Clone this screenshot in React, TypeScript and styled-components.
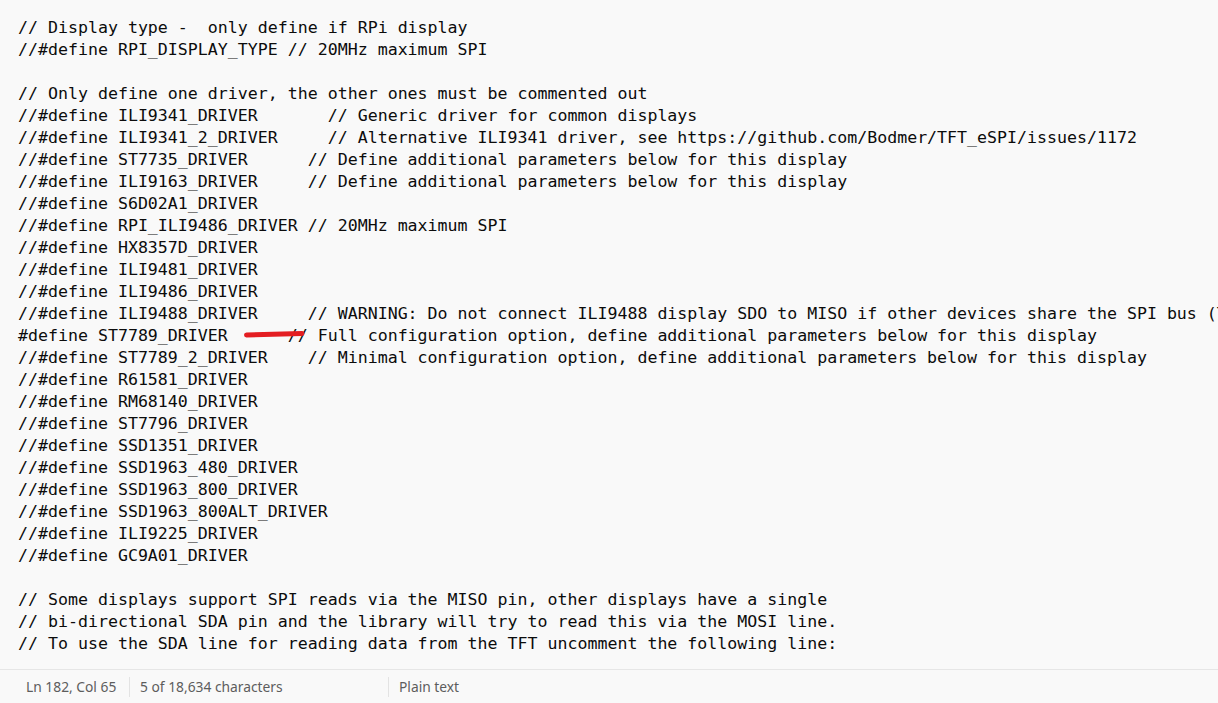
import React from "react";
import styled, { createGlobalStyle } from "styled-components";

const Global = createGlobalStyle`
  html, body { margin: 0; padding: 0; background: #f9f9f9; overflow: hidden; }
  #root { width: 1218px; height: 703px; }
`;

const Window = styled.div`
  width: 1218px;
  height: 703px;
  display: flex;
  flex-direction: column;
  background: #f9f9f9;
`;

const Editor = styled.div`
  position: relative;
  flex: 1;
  overflow: hidden;
  padding: 17px 0 0 18px;
`;

const Code = styled.pre`
  margin: 0;
  font-family: "DejaVu Sans Mono", "Liberation Mono", monospace;
  font-size: 16.6px;
  line-height: 22px;
  color: #0c0c0c;
  white-space: pre;
`;

const Mark = styled.svg`
  position: absolute;
  left: 0;
  top: 0;
  pointer-events: none;
`;

const StatusBar = styled.div`
  height: 33px;
  border-top: 1px solid #e6e6e6;
  display: flex;
  align-items: center;
  font-family: "Noto Sans", "Open Sans", sans-serif;
  font-size: 13.8px;
  color: #5d5d5d;
  padding-left: 14px;
`;

const StatusItem = styled.div<{ $w?: number; $sep?: boolean }>`
  ${(p) => (p.$w ? `width: ${p.$w}px;` : "")}
  box-sizing: border-box;
  height: 20px;
  display: flex;
  align-items: center;
  padding-left: ${(p) => (p.$sep ? 10 : 12)}px;
  border-left: ${(p) => (p.$sep ? "1px solid #e3e3e3" : "none")};
`;

const lines = [
  "// Display type -  only define if RPi display",
  "//#define RPI_DISPLAY_TYPE // 20MHz maximum SPI",
  "",
  "// Only define one driver, the other ones must be commented out",
  "//#define ILI9341_DRIVER       // Generic driver for common displays",
  "//#define ILI9341_2_DRIVER     // Alternative ILI9341 driver, see https://github.com/Bodmer/TFT_eSPI/issues/1172",
  "//#define ST7735_DRIVER      // Define additional parameters below for this display",
  "//#define ILI9163_DRIVER     // Define additional parameters below for this display",
  "//#define S6D02A1_DRIVER",
  "//#define RPI_ILI9486_DRIVER // 20MHz maximum SPI",
  "//#define HX8357D_DRIVER",
  "//#define ILI9481_DRIVER",
  "//#define ILI9486_DRIVER",
  "//#define ILI9488_DRIVER     // WARNING: Do not connect ILI9488 display SDO to MISO if other devices share the SPI bus (TFT SDO does NOT tristate when CS is high)",
  "#define ST7789_DRIVER      // Full configuration option, define additional parameters below for this display",
  "//#define ST7789_2_DRIVER    // Minimal configuration option, define additional parameters below for this display",
  "//#define R61581_DRIVER",
  "//#define RM68140_DRIVER",
  "//#define ST7796_DRIVER",
  "//#define SSD1351_DRIVER",
  "//#define SSD1963_480_DRIVER",
  "//#define SSD1963_800_DRIVER",
  "//#define SSD1963_800ALT_DRIVER",
  "//#define ILI9225_DRIVER",
  "//#define GC9A01_DRIVER",
  "",
  "// Some displays support SPI reads via the MISO pin, other displays have a single",
  "// bi-directional SDA pin and the library will try to read this via the MOSI line.",
  "// To use the SDA line for reading data from the TFT uncomment the following line:",
];

export default function App() {
  return (
    <>
      <Global />
      <Window>
        <Editor>
          <Code>{lines.join("\n")}</Code>
          <Mark width="1218" height="669">
            <line
              x1="246.5"
              y1="335"
              x2="302"
              y2="333.5"
              stroke="#e41e22"
              strokeWidth="5"
              strokeLinecap="round"
            />
          </Mark>
        </Editor>
        <StatusBar>
          <StatusItem $w={115}>Ln 182, Col 65</StatusItem>
          <StatusItem $w={259} $sep>
            5 of 18,634 characters
          </StatusItem>
          <StatusItem $sep>Plain text</StatusItem>
        </StatusBar>
      </Window>
    </>
  );
}
